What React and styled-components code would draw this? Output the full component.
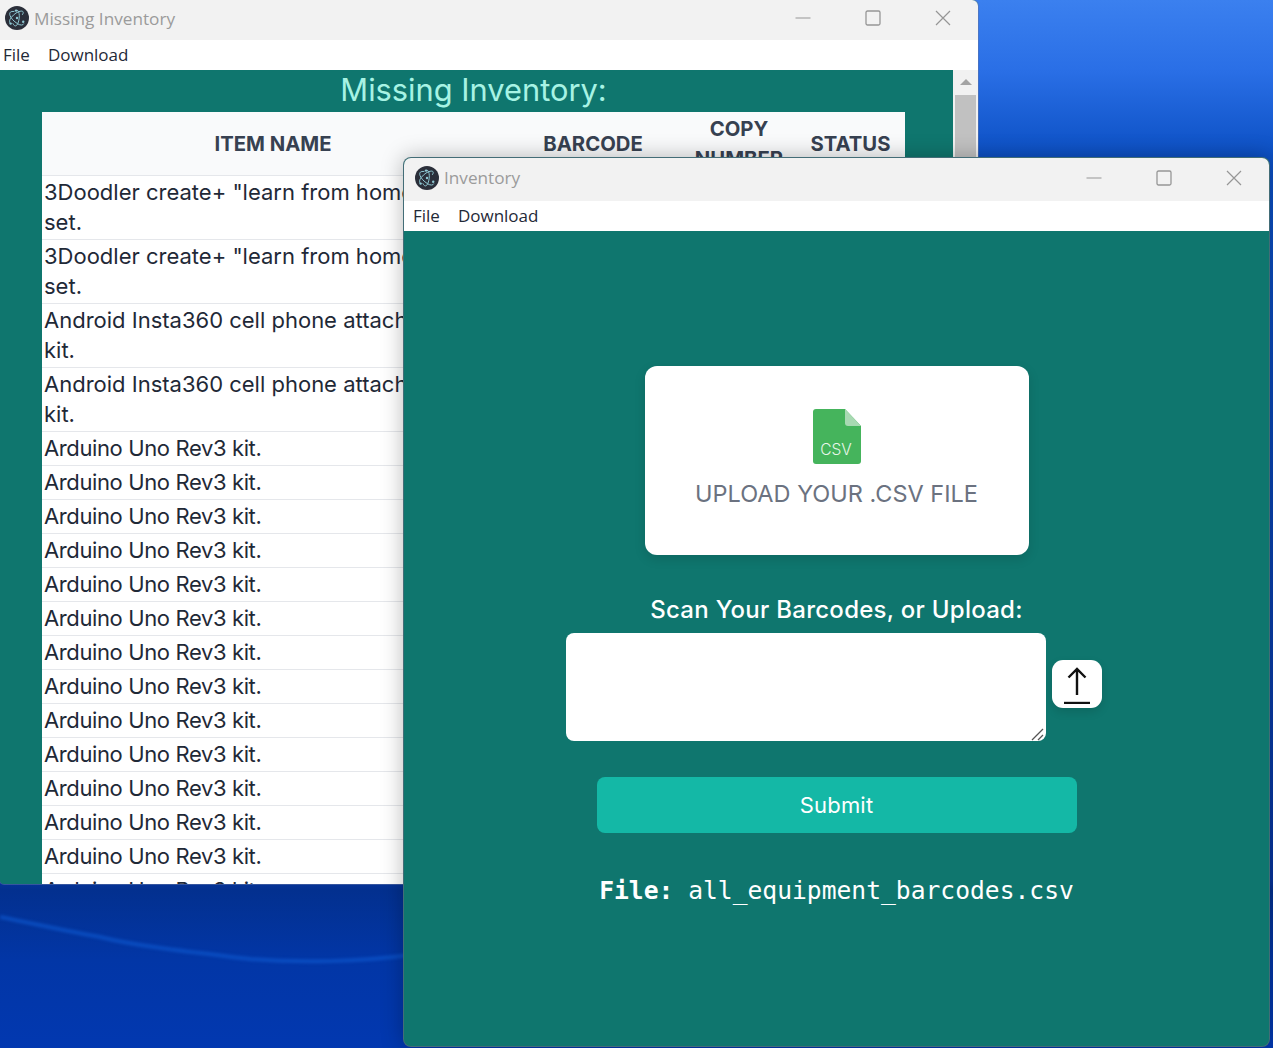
import React from "react"
import styled, { createGlobalStyle } from "styled-components"

const GlobalStyle = createGlobalStyle`
  html, body {
    margin: 0;
    padding: 0;
    overflow: hidden;
  }
`

const missingItems = [
  { name: '3Doodler create+ "learn from home" 3D set.', barcode: "31620", copy: "1" },
  { name: '3Doodler create+ "learn from home" 3D set.', barcode: "31621", copy: "2" },
  { name: "Android Insta360 cell phone attachment pro kit.", barcode: "31700", copy: "1" },
  { name: "Android Insta360 cell phone attachment pro kit.", barcode: "31701", copy: "2" },
  ...Array.from({ length: 14 }, (_, i) => ({
    name: "Arduino Uno Rev3 kit.",
    barcode: String(31800 + i),
    copy: String(i + 1),
    short: true,
  })),
]

const Desktop = styled.div`
  position: relative;
  width: 1273px;
  height: 1048px;
  overflow: hidden;
  background: linear-gradient(
    180deg,
    #3b80ef 0px,
    #2a6fe6 70px,
    #0c50c4 156px,
    #06349c 880px,
    #03308f 890px,
    #0236a6 960px,
    #0238b0 1048px
  );
`

const Streak = styled.svg`
  position: absolute;
  left: 0;
  top: 885px;
  width: 410px;
  height: 100px;
  filter: blur(1.5px);
`

const Window = styled.div`
  position: absolute;
  left: ${p => p.$left}px;
  top: ${p => p.$top}px;
  width: ${p => p.$width}px;
  height: ${p => p.$height}px;
  display: flex;
  flex-direction: column;
  overflow: hidden;
  box-sizing: border-box;
  background: #0f766e;
  border-radius: ${p => (p.$front ? "8px" : "0 6px 0 4px")};
  border: ${p => (p.$front ? "1.5px solid rgba(95, 105, 125, 0.65)" : "none")};
  box-shadow: ${p =>
    p.$front
      ? "0 0 22px rgba(0, 0, 0, 0.28)"
      : "0 0 0 1px rgba(95, 115, 165, 0.55)"};
`

const TitleBar = styled.div`
  flex: none;
  height: ${p => p.$height}px;
  box-sizing: border-box;
  padding-bottom: 4px;
  display: flex;
  align-items: center;
  background: #f2f2f2;
  padding-left: ${p => p.$inset}px;
`

const AppIcon = styled.svg`
  width: 24px;
  height: 24px;
  flex: none;
`

const WindowTitle = styled.span`
  margin-left: 5px;
  font-family: "Open Sans", sans-serif;
  font-size: 17.2px;
  color: #9b9b9b;
`

const WindowControls = styled.div`
  margin-left: auto;
  display: flex;
  height: 100%;
`

const ControlButton = styled.div`
  width: 70px;
  display: flex;
  align-items: center;
  justify-content: center;
`

const MenuBar = styled.div`
  flex: none;
  height: 30px;
  box-sizing: border-box;
  padding-bottom: 1px;
  display: flex;
  align-items: center;
  gap: 18px;
  background: #fff;
  padding-left: ${p => p.$inset}px;
  font-family: "Open Sans", sans-serif;
  font-size: 17px;
  color: #1f2937;
`

const Body = styled.div`
  flex: 1;
  min-height: 0;
  display: flex;
`

const ScrollArea = styled.div`
  flex: 1;
  min-width: 0;
  padding: 0 48px 0 42px;
  overflow: hidden;
`

const Heading = styled.h1`
  margin: 0;
  height: 42px;
  line-height: 40px;
  text-align: center;
  font-family: Inter, sans-serif;
  font-size: 30.8px;
  font-weight: 400;
  color: #a7f3e4;
`

const Table = styled.table`
  width: 863px;
  table-layout: fixed;
  border-collapse: collapse;
  background: #fff;
  font-family: Inter, sans-serif;
`

const HeadCell = styled.th`
  width: ${p => p.$width}px;
  height: 63px;
  padding: 0;
  background: #f9fafb;
  color: #374151;
  font-size: 20.3px;
  line-height: 30px;
  font-weight: 700;
  text-transform: uppercase;
  border-bottom: 1px solid #e5e7eb;
`

const Row = styled.tr`
  border-bottom: 1px solid #e5e7eb;
`

const Cell = styled.td`
  padding: 1px 2px 2px;
  font-size: 22px;
  line-height: 30px;
  color: #1f2937;
  letter-spacing: ${p => (p.$short ? "-0.38px" : "0")};
`

const Scrollbar = styled.div`
  flex: none;
  width: 25px;
  display: flex;
  flex-direction: column;
  align-items: center;
  background: #f1f1f1;
`

const ScrollArrow = styled.div`
  margin-top: 9px;
  width: 0;
  height: 0;
  border-left: 6px solid transparent;
  border-right: 6px solid transparent;
  border-bottom: 6px solid #a3a3a3;
`

const ScrollThumb = styled.div`
  margin-top: 10px;
  width: 21px;
  height: 300px;
  background: #c1c1c1;
`

const Uploader = styled.div`
  flex: 1;
  display: flex;
  flex-direction: column;
  align-items: center;
  padding-top: 135px;
`

const UploadCard = styled.div`
  width: 384px;
  height: 189px;
  box-sizing: border-box;
  padding-top: 43px;
  display: flex;
  flex-direction: column;
  align-items: center;
  background: #fff;
  border-radius: 12px;
  box-shadow: 0 4px 12px rgba(0, 0, 0, 0.12);
`

const UploadText = styled.div`
  margin-top: 15px;
  font-family: Inter, sans-serif;
  font-size: 23.5px;
  line-height: 30px;
  color: #6b7280;
`

const ScanLabel = styled.label`
  margin-top: 39px;
  font-family: Inter, sans-serif;
  font-size: 24px;
  font-weight: 500;
  letter-spacing: 0.27px;
  line-height: 32px;
  color: #fff;
`

const ScanRow = styled.div`
  margin-top: 7px;
  width: 542px;
  display: flex;
  align-items: flex-start;
  gap: 6px;
`

const ScanBox = styled.div`
  position: relative;
  width: 480px;
  height: 108px;
`

const ScanInput = styled.textarea`
  display: block;
  width: 100%;
  height: 100%;
  box-sizing: border-box;
  border: none;
  outline: none;
  resize: none;
  border-radius: 8px;
  background: #fff;
`

const ResizeGrip = styled.svg`
  position: absolute;
  right: 1px;
  bottom: 0;
  width: 14px;
  height: 14px;
`

const ScanButton = styled.button`
  margin-top: 27px;
  width: 50px;
  height: 48px;
  padding: 0;
  display: flex;
  align-items: center;
  justify-content: center;
  border: none;
  border-radius: 11px;
  background: #fff;
  box-shadow: 0 4px 10px rgba(0, 0, 0, 0.12);
`

const SubmitButton = styled.button`
  margin-top: 36px;
  width: 480px;
  height: 56px;
  border: none;
  border-radius: 8px;
  background: #14b8a6;
  color: #fff;
  font-family: Inter, sans-serif;
  font-size: 22px;
  font-weight: 400;
  letter-spacing: 0.2px;
`

const FileLine = styled.div`
  margin-top: 41px;
  font-family: "DejaVu Sans Mono", monospace;
  font-size: 24.65px;
  line-height: 34px;
  color: #fff;
`

const FileLabel = styled.b`
  font-weight: 700;
`

const ElectronIcon = () => (
  <AppIcon viewBox="0 0 24 24">
    <circle cx="12" cy="12" r="12" fill="#2b2f3a" />
    <g fill="none" stroke="#8fc9d4" strokeWidth="1" strokeLinecap="round">
      <path d="M9 5.5C5.5 5 4 6.5 5 9.5c.8 2.6 4 6 7.5 8.2 3 1.8 5.5 1.8 6.2.2" />
      <path d="M17.5 8.5c1.5-2.2.8-3.6-1.6-3.4-3 .2-7 3-9.6 6.3-1.9 2.5-2.4 5-.9 6" />
      <path d="M8 17.7c1 2.3 2.7 3 4 1.2 1.4-2 2.4-5.6 2.3-9.4-.1-2.8-.9-5-2.1-5.4" />
    </g>
    <circle cx="11" cy="4.6" r="1.2" fill="#8fc9d4" />
    <circle cx="5.6" cy="17.6" r="1.2" fill="#8fc9d4" />
    <circle cx="18.2" cy="15.8" r="1.2" fill="#8fc9d4" />
    <circle cx="12" cy="12" r="1.2" fill="#8fc9d4" />
  </AppIcon>
)

const Controls = () => (
  <WindowControls>
    <ControlButton>
      <svg width="16" height="16" viewBox="0 0 16 16">
        <path d="M0.5 8h15" stroke="#969696" strokeWidth="1" />
      </svg>
    </ControlButton>
    <ControlButton>
      <svg width="16" height="16" viewBox="0 0 16 16" fill="none">
        <rect x="1" y="1" width="14" height="14" rx="1.5" stroke="#969696" strokeWidth="1.3" />
      </svg>
    </ControlButton>
    <ControlButton>
      <svg width="16" height="16" viewBox="0 0 16 16">
        <path d="M1 1l14 14M15 1L1 15" stroke="#969696" strokeWidth="1.2" />
      </svg>
    </ControlButton>
  </WindowControls>
)

const CsvIcon = () => (
  <svg width="48" height="55" viewBox="0 0 48 55">
    <path d="M3 0h29l16 17v35a3 3 0 0 1-3 3H3a3 3 0 0 1-3-3V3a3 3 0 0 1 3-3z" fill="#45b45c" />
    <path d="M32 0l16 17H35a3 3 0 0 1-3-3z" fill="#a8d9b2" />
    <text x="23" y="46" textAnchor="middle" fontFamily="Inter, sans-serif" fontSize="15.5" fontWeight="300" fill="#e8f6ea">CSV</text>
  </svg>
)

const UploadIcon = () => (
  <svg width="30" height="40" viewBox="0 0 30 40" fill="none" stroke="#111" strokeWidth="2.4">
    <path d="M15 31V5M6.5 13.5L15 5l8.5 8.5" />
    <path d="M2 39h26" />
  </svg>
)

const App = () => (
  <Desktop>
    <GlobalStyle />
    <Streak viewBox="0 0 410 100" fill="none">
      <path d="M0 32C40 40 70 47 100 52C140 62 200 68 250 74C300 78 360 77 410 70" stroke="#0d56cc" strokeWidth="4" opacity="0.7" />
    </Streak>

    <Window $left={0} $top={0} $width={978} $height={884}>
      <TitleBar $height={40} $inset={5}>
        <ElectronIcon />
        <WindowTitle>Missing Inventory</WindowTitle>
        <Controls />
      </TitleBar>
      <MenuBar $inset={3}>
        <span>File</span>
        <span>Download</span>
      </MenuBar>
      <Body>
        <ScrollArea>
          <Heading>Missing Inventory:</Heading>
          <Table>
            <thead>
              <tr>
                <HeadCell $width={462}>Item Name</HeadCell>
                <HeadCell $width={178}>Barcode</HeadCell>
                <HeadCell $width={114}>Copy Number</HeadCell>
                <HeadCell $width={109}>Status</HeadCell>
              </tr>
            </thead>
            <tbody>
              {missingItems.map((item, index) => (
                <Row key={index}>
                  <Cell $short={item.short}>{item.name}</Cell>
                  <Cell>{item.barcode}</Cell>
                  <Cell>{item.copy}</Cell>
                  <Cell>Missing</Cell>
                </Row>
              ))}
            </tbody>
          </Table>
        </ScrollArea>
        <Scrollbar>
          <ScrollArrow />
          <ScrollThumb />
        </Scrollbar>
      </Body>
    </Window>

    <Window $front $left={403} $top={157} $width={867} $height={890}>
      <TitleBar $height={43} $inset={11}>
        <ElectronIcon />
        <WindowTitle>Inventory</WindowTitle>
        <Controls />
      </TitleBar>
      <MenuBar $inset={9}>
        <span>File</span>
        <span>Download</span>
      </MenuBar>
      <Uploader>
        <UploadCard>
          <CsvIcon />
          <UploadText>UPLOAD YOUR .CSV FILE</UploadText>
        </UploadCard>
        <ScanLabel>Scan Your Barcodes, or Upload:</ScanLabel>
        <ScanRow>
          <ScanBox>
            <ScanInput />
            <ResizeGrip viewBox="0 0 14 14" fill="none" stroke="#555" strokeWidth="1.3">
              <path d="M1 13L12 2M7 13l5-5" />
            </ResizeGrip>
          </ScanBox>
          <ScanButton>
            <UploadIcon />
          </ScanButton>
        </ScanRow>
        <SubmitButton>Submit</SubmitButton>
        <FileLine>
          <FileLabel>File:</FileLabel> all_equipment_barcodes.csv
        </FileLine>
      </Uploader>
    </Window>
  </Desktop>
)

export default App
